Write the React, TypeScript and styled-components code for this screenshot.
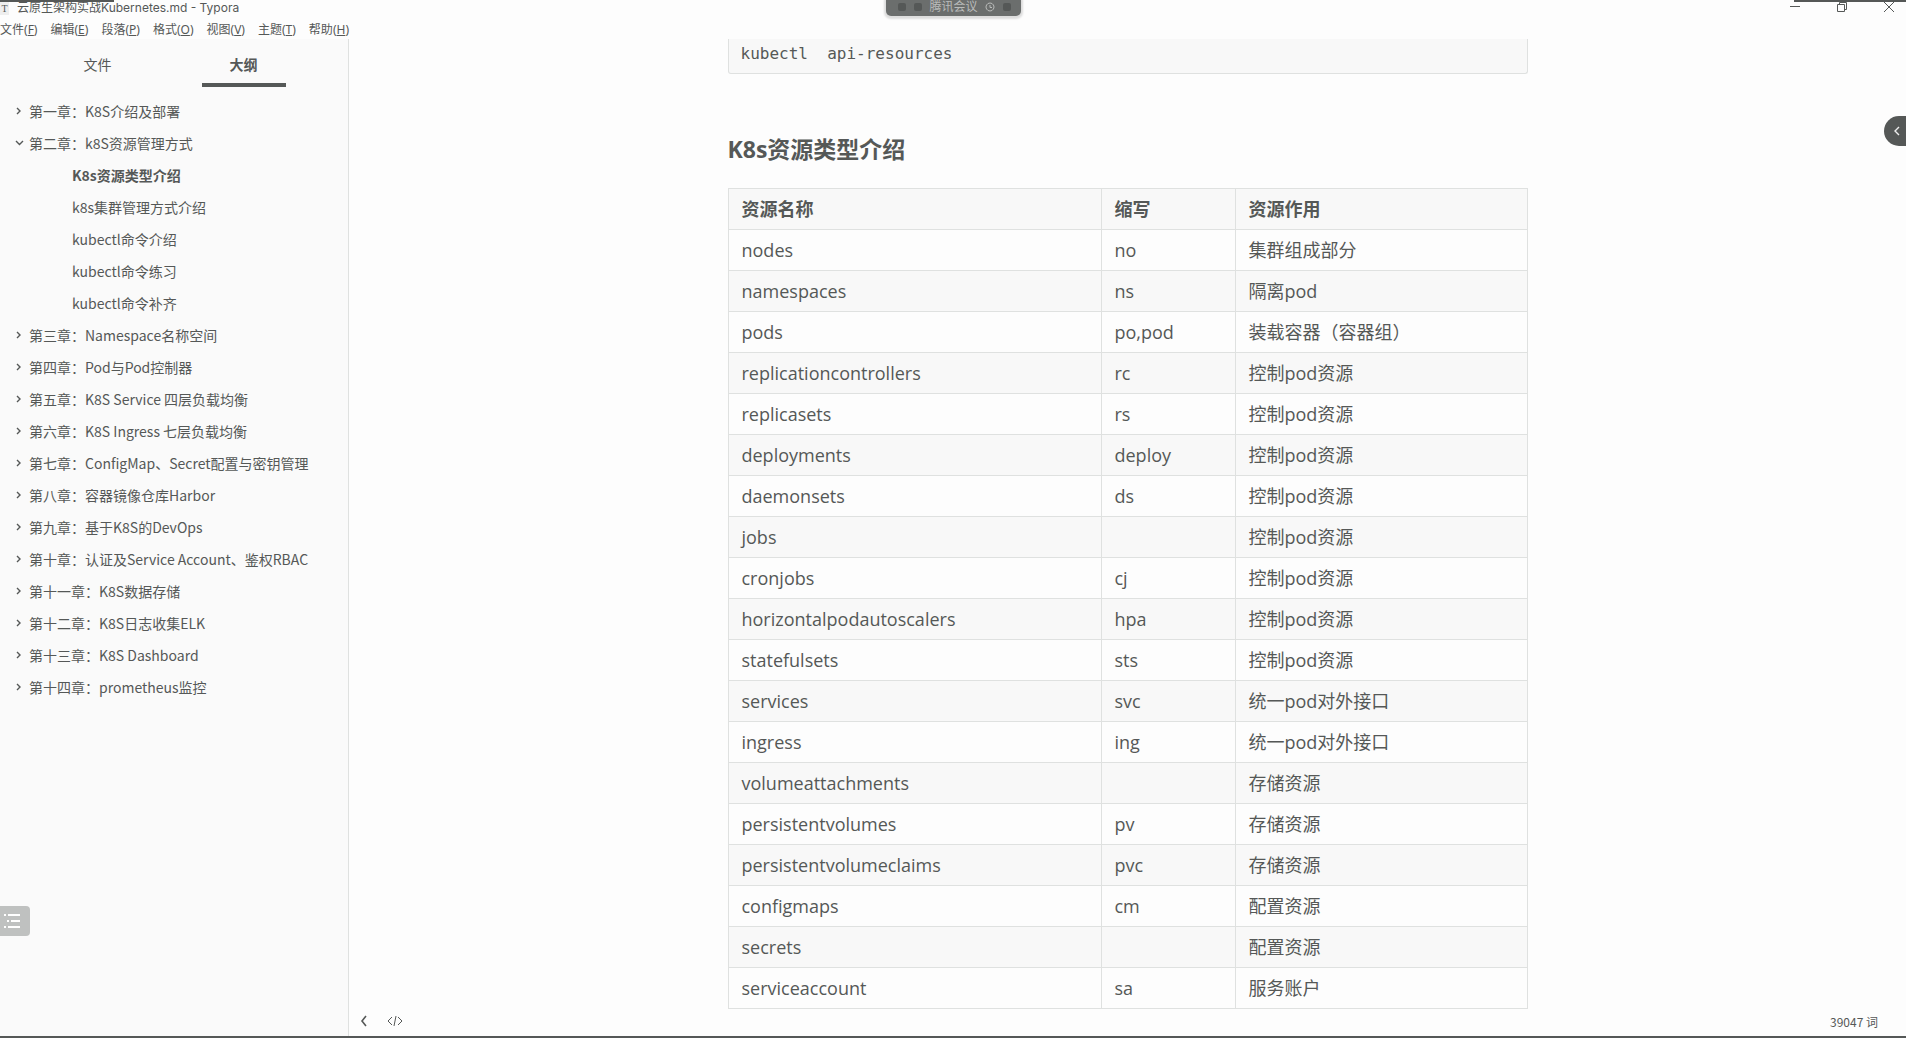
import React from "react";
import styled, { createGlobalStyle } from "styled-components";

const ink = "#555857";
const line = "#dfe1e0";
const paper = "#fdfdfd";
const tint = "#f8f8f8";
const side = "#fafafa";

const GlobalStyle = createGlobalStyle`
  * { box-sizing: border-box; }
  body {
    margin: 0;
    background: ${paper};
    color: ${ink};
    font-family: "Open Sans", "Noto Sans CJK SC", sans-serif;
  }
  button { font: inherit; color: inherit; background: none; border: 0; padding: 0; }
`;

const Window = styled.div`
  height: 100vh;
  display: flex;
  flex-direction: column;
  overflow: hidden;
  border-bottom: 2px solid ${ink};
`;

const TitleBar = styled.header`
  position: relative;
  flex: none;
  height: 16px;
  display: flex;
  align-items: center;
  justify-content: space-between;
  font-family: Inter, "Noto Sans CJK SC", sans-serif;
  font-size: 12px;
  line-height: 16px;
`;

const EdgeLine = styled.span<{ $side: "left" | "right"; $width: number }>`
  position: absolute;
  top: 0;
  ${(p) => p.$side}: 0;
  width: ${(p) => p.$width}px;
  height: 2px;
  background: ${ink};
`;

const Title = styled.div`
  display: flex;
  align-items: center;
  gap: 8px;
`;

const FileMark = styled.span`
  width: 9px;
  height: 13px;
  background: #eeeeee;
  font-family: "Liberation Serif", serif;
  font-size: 10px;
  line-height: 14px;
  text-align: center;
`;

const Controls = styled.div`
  display: flex;
  align-items: center;
  gap: 35px;
  padding-right: 11px;
`;

const Control = styled.button`
  width: 12px;
  height: 12px;
  display: flex;
`;

const Meeting = styled.div`
  position: absolute;
  top: 0;
  left: 50%;
  margin-left: -67px;
  width: 135px;
  height: 16px;
  display: flex;
  align-items: center;
  justify-content: space-between;
  padding: 0 10px 2px 12px;
  background: #6b6e6d;
  border-radius: 0 0 5px 5px;
  box-shadow: 0 1px 2px 2px #dddddd;
  color: #b9bbba;
  line-height: 12px;
`;

const Dot = styled.span`
  width: 8px;
  height: 8px;
  border-radius: 2px;
  background: ${ink};
`;

const MenuBar = styled.nav`
  flex: none;
  height: 23px;
  display: flex;
  align-items: flex-end;
  gap: 13px;
  font-family: "Noto Sans", "Noto Sans CJK SC", sans-serif;
  font-size: 12px;
  line-height: 16px;
  padding-bottom: 1px;
`;

const MenuItem = styled.button`
  white-space: nowrap;
`;

const Body = styled.div`
  flex: 1;
  min-height: 0;
  display: flex;
`;

const Sidebar = styled.aside`
  position: relative;
  flex: none;
  width: 349px;
  background: ${side};
  border-right: 1px solid ${line};
`;

const Tabs = styled.div`
  display: flex;
  justify-content: center;
  gap: 62px;
  height: 48px;
  padding-right: 7px;
  font-size: 14px;
`;

const Tab = styled.button<{ $on?: boolean }>`
  width: 84px;
  height: 48px;
  padding-top: 6px;
  font-weight: ${(p) => (p.$on ? 700 : 400)};
  border-bottom: 4px solid ${(p) => (p.$on ? ink : "transparent")};
  display: flex;
  align-items: center;
  justify-content: center;
`;

const Outline = styled.ul`
  list-style: none;
  margin: 0;
  padding: 8px 0 0 12px;
  font-family: "Noto Sans CJK SC", sans-serif;
  font-size: 14px;
`;

const OutlineRow = styled.li<{ $child?: boolean; $active?: boolean }>`
  display: flex;
  align-items: center;
  gap: 3px;
  height: 32px;
  padding-left: ${(p) => (p.$child ? 60 : 0)}px;
  font-weight: ${(p) => (p.$active ? 700 : 400)};
  white-space: nowrap;
`;

const Twist = styled.button`
  width: 14px;
  height: 14px;
  display: flex;
`;

const OutlineLink = styled.a`
  color: inherit;
  text-decoration: none;
`;

const OutlineToggle = styled.button`
  position: absolute;
  left: 0;
  bottom: 100px;
  width: 30px;
  height: 30px;
  display: flex;
  border-radius: 0 4px 4px 0;
  background: #bfc1c0;
`;

const Main = styled.main`
  position: relative;
  flex: 1;
  min-width: 0;
  display: flex;
  flex-direction: column;
  align-items: center;
`;

const Article = styled.article`
  width: 800px;
  max-width: 100%;
  font-size: 18px;
  line-height: 26px;
`;

const Code = styled.pre`
  margin: 0;
  height: 35px;
  padding: 2px 12px 0;
  background: ${tint};
  border: 1px solid ${line};
  border-top: 0;
  border-radius: 0 0 3px 3px;
  font-family: "DejaVu Sans Mono", monospace;
  font-size: 16px;
  line-height: 26px;
`;

const Heading = styled.h4`
  margin: 58px 0 22px;
  font-size: 23px;
  line-height: 34px;
`;

const Table = styled.table`
  width: 100%;
  table-layout: fixed;
  border-collapse: collapse;
`;

const Row = styled.tr<{ $shade?: boolean }>`
  height: 41px;
  background: ${(p) => (p.$shade ? tint : paper)};
`;

const Head = styled.th<{ $w?: number }>`
  width: ${(p) => (p.$w ? p.$w + "px" : "auto")};
  padding: 0 13px;
  border: 1px solid ${line};
  text-align: left;
`;

const Cell = styled.td`
  padding: 0 13px;
  border: 1px solid ${line};
`;

const Status = styled.footer`
  position: absolute;
  left: 0;
  right: 0;
  bottom: 0;
  height: 30px;
  padding: 0 28px 0 8px;
  display: flex;
  align-items: center;
  justify-content: space-between;
  font-family: "Noto Sans CJK SC", sans-serif;
  font-size: 12px;
`;

const StatusTools = styled.div`
  display: flex;
  align-items: center;
  gap: 14px;
`;

const StatusButton = styled.button`
  width: 16px;
  height: 16px;
  display: flex;
`;

const Drawer = styled.button`
  position: absolute;
  right: 0;
  top: 77px;
  width: 22px;
  height: 30px;
  display: flex;
  align-items: center;
  justify-content: center;
  padding-left: 4px;
  border-radius: 15px 0 0 15px;
  background: ${ink};
  color: #eeeeee;
`;

const menus = [
  ["文件", "F"], ["编辑", "E"], ["段落", "P"], ["格式", "O"],
  ["视图", "V"], ["主题", "T"], ["帮助", "H"],
];

const outline: { text: string; child?: boolean; active?: boolean; open?: boolean }[] = [
  { text: "第一章：K8S介绍及部署" },
  { text: "第二章：k8S资源管理方式", open: true },
  { text: "K8s资源类型介绍", child: true, active: true },
  { text: "k8s集群管理方式介绍", child: true },
  { text: "kubectl命令介绍", child: true },
  { text: "kubectl命令练习", child: true },
  { text: "kubectl命令补齐", child: true },
  { text: "第三章：Namespace名称空间" },
  { text: "第四章：Pod与Pod控制器" },
  { text: "第五章：K8S Service 四层负载均衡" },
  { text: "第六章：K8S Ingress 七层负载均衡" },
  { text: "第七章：ConfigMap、Secret配置与密钥管理" },
  { text: "第八章：容器镜像仓库Harbor" },
  { text: "第九章：基于K8S的DevOps" },
  { text: "第十章：认证及Service Account、鉴权RBAC" },
  { text: "第十一章：K8S数据存储" },
  { text: "第十二章：K8S日志收集ELK" },
  { text: "第十三章：K8S Dashboard" },
  { text: "第十四章：prometheus监控" },
];

const rows = [
  ["nodes", "no", "集群组成部分"],
  ["namespaces", "ns", "隔离pod"],
  ["pods", "po,pod", "装载容器（容器组）"],
  ["replicationcontrollers", "rc", "控制pod资源"],
  ["replicasets", "rs", "控制pod资源"],
  ["deployments", "deploy", "控制pod资源"],
  ["daemonsets", "ds", "控制pod资源"],
  ["jobs", "", "控制pod资源"],
  ["cronjobs", "cj", "控制pod资源"],
  ["horizontalpodautoscalers", "hpa", "控制pod资源"],
  ["statefulsets", "sts", "控制pod资源"],
  ["services", "svc", "统一pod对外接口"],
  ["ingress", "ing", "统一pod对外接口"],
  ["volumeattachments", "", "存储资源"],
  ["persistentvolumes", "pv", "存储资源"],
  ["persistentvolumeclaims", "pvc", "存储资源"],
  ["configmaps", "cm", "配置资源"],
  ["secrets", "", "配置资源"],
  ["serviceaccount", "sa", "服务账户"],
];

const Stroke = ({ d, size, width = 1 }: { d: string; size: number; width?: number }) => (
  <svg width={size} height={size} viewBox={`0 0 ${size} ${size}`} fill="none" stroke="currentColor" strokeWidth={width}>
    <path d={d} />
  </svg>
);

export default function App() {
  return (
    <>
      <GlobalStyle />
      <Window>
        <TitleBar>
          <EdgeLine $side="left" $width={114} />
          <EdgeLine $side="right" $width={112} />
          <Title>
            <FileMark>T</FileMark>
            <span>云原生架构实战Kubernetes.md - Typora</span>
          </Title>
          <Meeting>
            <Dot />
            <Dot />
            <span>腾讯会议</span>
            <Stroke size={10} d="M5 1a4 4 0 1 0 .01 0M5 3v2.500h2" />
            <Dot />
          </Meeting>
          <Controls>
            <Control aria-label="最小化"><Stroke size={12} d="M1 4.500h10" /></Control>
            <Control aria-label="还原"><Stroke size={12} d="M1.500 2.500h7v7h-7zM3.500 2.500v-2h7v7h-2" /></Control>
            <Control aria-label="关闭"><Stroke size={12} d="M1 0l10 10M11 0L1 10" /></Control>
          </Controls>
        </TitleBar>
        <MenuBar>
          {menus.map(([name, key]) => (
            <MenuItem key={key}>{name}(<u>{key}</u>)</MenuItem>
          ))}
        </MenuBar>
        <Body>
          <Sidebar>
            <Tabs>
              <Tab>文件</Tab>
              <Tab $on>大纲</Tab>
            </Tabs>
            <Outline>
              {outline.map((o) => (
                <OutlineRow key={o.text} $child={o.child} $active={o.active}>
                  {!o.child && (
                    <Twist aria-label={o.open ? "折叠" : "展开"}>
                      <Stroke size={14} width={1.4} d={o.open ? "M4 5l3.500 3.500L11 5" : "M5 4l3 3-3 3"} />
                    </Twist>
                  )}
                  <OutlineLink href="#">{o.text}</OutlineLink>
                </OutlineRow>
              ))}
            </Outline>
            <OutlineToggle aria-label="目录">
              <svg width="30" height="30" viewBox="0 0 30 30" fill="#ffffff">
                <path d="M4 8h2v2H4zM8 8h12v2H8zM7 14h2v2H7zM11 14h9v2h-9zM4 20h2v2H4zM8 20h12v2H8z" />
              </svg>
            </OutlineToggle>
          </Sidebar>
          <Main>
            <Article>
              <Code>{"kubectl  api-resources"}</Code>
              <Heading>K8s资源类型介绍</Heading>
              <Table>
                <thead>
                  <Row $shade>
                    <Head $w={373}>资源名称</Head>
                    <Head $w={134}>缩写</Head>
                    <Head>资源作用</Head>
                  </Row>
                </thead>
                <tbody>
                  {rows.map((r, i) => (
                    <Row key={r[0]} $shade={i % 2 === 1}>
                      <Cell>{r[0]}</Cell>
                      <Cell>{r[1]}</Cell>
                      <Cell>{r[2]}</Cell>
                    </Row>
                  ))}
                </tbody>
              </Table>
            </Article>
            <Drawer aria-label="展开侧栏"><Stroke size={10} d="M7 1L3 5l4 4" width={1.4} /></Drawer>
            <Status>
              <StatusTools>
                <StatusButton aria-label="隐藏侧栏"><Stroke size={16} width={1.6} d="M9 3L5 8l4 5" /></StatusButton>
                <StatusButton aria-label="源代码模式"><Stroke size={16} d="M5 4L1 8l4 4M11 4l4 4-4 4M9 3L7 13" /></StatusButton>
              </StatusTools>
              <span>39047 词</span>
            </Status>
          </Main>
        </Body>
      </Window>
    </>
  );
}
